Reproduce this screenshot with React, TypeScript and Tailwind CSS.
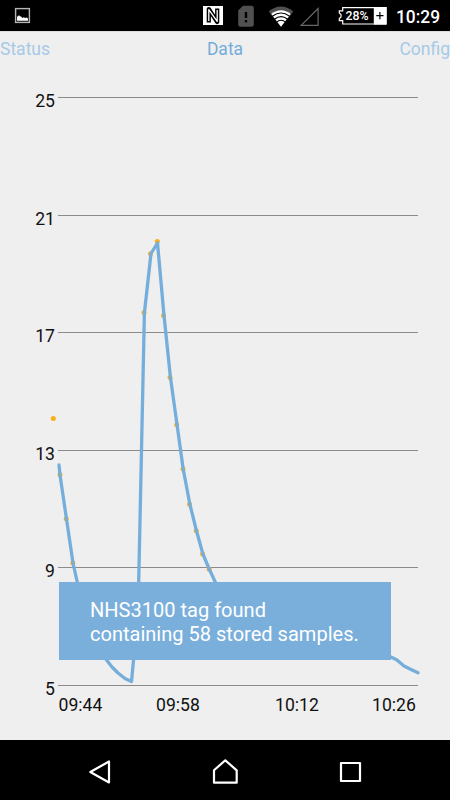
import React from 'react';

const gridLines = [
  { label: '25', y: 97.5 },
  { label: '21', y: 215.5 },
  { label: '17', y: 332.5 },
  { label: '13', y: 450.5 },
  { label: '9', y: 567.5 },
  { label: '5', y: 685.5 },
];

const times = [
  { label: '09:44', x: 58.5 },
  { label: '09:58', x: 156 },
  { label: '10:12', x: 275 },
  { label: '10:26', x: 372 },
];

const curve =
  '59,465 60,475 66.5,519 73,563 79,590 86,617 92,637 99,650 105,658 112,667 118,673 125,678.5 131.5,681.5 134,655 138.7,582 144.4,313 151,253.5 157.5,243 164,315.5 170.4,377 177,424.5 183.2,469 189.8,504 196.4,530.5 202.9,554 209.2,569 215.7,583 230,608 260,628 300,640 340,648 391,657 397,660 404,666 411,669.5 418,672.8';

const samples: [number, number][] = [
  [53.3, 418.5], [60, 474.7], [66.2, 518.8], [72.8, 563], [144, 312.5], [150.5, 253.7], [157.3, 241.5],
  [163.5, 315.5], [170, 377.5], [176.7, 424.7], [183, 469], [189.5, 504.3], [196.2, 530.8], [202.6, 554], [209.2, 569.3],
];

function StatusBar() {
  return (
    <header className="h-[31px] shrink-0 bg-black">
      <svg width="450" height="31" viewBox="0 0 450 31" className="block">
        <rect x="15.6" y="8.6" width="13.8" height="13.8" fill="none" stroke="#b5b5b5" strokeWidth="1.4" />
        <path d="M17 20.8V16.5l1.2-.2.8-1.3.8 1.2 1.3.2 1.2 1.6 1.5-.8 1.4.8 1.5-.4 1.3.8v2.4z" fill="#fff" />
        <rect x="203" y="6" width="20" height="19" fill="#fff" />
        <path d="M208.8 22.6V9L217.2 22V8.4" fill="none" stroke="#000" strokeWidth="4.2" strokeLinejoin="round" />
        <path d="M208.8 21V9.6L217.2 21.4V10" fill="none" stroke="#fff" strokeWidth="1.3" strokeLinejoin="round" />
        <path d="M243 5.7h8.5q2.3 0 2.3 2.3v16.5q0 2.3-2.3 2.3h-11q-2.3 0-2.3-2.3V10.5z" fill="#505050" />
        <path d="M246 12v6" stroke="#000" strokeWidth="2.4" />
        <path d="M246 20v2.4" stroke="#000" strokeWidth="2.4" />
        <path d="M268.7 11.4Q281 1.8 293.3 11.4L281 26.8z" fill="#505050" />
        <path d="M271.3 13.9Q281 6.4 290.7 13.9L281 26.8z" fill="#fff" />
        <g fill="none" stroke="#000" strokeWidth="1.1">
          <path d="M272.4 16.2Q281 9.8 289.6 16.2" />
          <path d="M274.4 19.2Q281 14 287.6 19.2" />
          <path d="M276.4 22.2Q281 18.3 285.6 22.2" />
        </g>
        <path d="M318.1 8.5v16.9h-16.9z" fill="none" stroke="#686868" strokeWidth="1.2" />
        <path d="M342.7 7.6H386V24H342.7V20.7H339.3V18.5L341 17V14.5L339.3 13V10.8H342.7z" fill="none" stroke="#fff" strokeWidth="1.2" />
        <path d="M373.8 7h12.8v17.6h-12.8z" fill="#fff" />
        <path d="M376.3 15.6h7.2M379.9 12v7.2" stroke="#000" strokeWidth="1.2" />
        <text x="357.1" y="20" fill="#fff" fontSize="12.8" fontWeight="500" textAnchor="middle" textLength="23" lengthAdjust="spacingAndGlyphs">28%</text>
        <text x="396" y="22.5" fill="#fff" fontSize="18" fontWeight="500" textLength="44" lengthAdjust="spacingAndGlyphs">10:29</text>
      </svg>
    </header>
  );
}

function Tabs() {
  return (
    <nav className="grid h-[37px] shrink-0 grid-cols-3 border-t border-[#dcdcdc] text-[17.5px] leading-[35px]">
      <span className="text-[#a6cae7]">Status</span>
      <span className="text-center text-[#74acda]">Data</span>
      <span className="text-right text-[#a6cae7]">Config</span>
    </nav>
  );
}

function TemperatureChart() {
  return (
    <svg width="450" height="672" viewBox="0 68 450 672" className="block">
      {gridLines.map((line) => (
        <g key={line.label}>
          <path d={`M58 ${line.y}H418`} stroke="#8b8b8b" strokeWidth="1" />
          <text x="55" y={line.y + 9} textAnchor="end" fontSize="17.6" fill="#111">{line.label}</text>
        </g>
      ))}
      {samples.map(([x, y]) => (
        <circle key={x} cx={x} cy={y} r="2.5" fill="#fbae17" />
      ))}
      <polyline points={curve} fill="none" stroke="#76aedb" strokeWidth="3.3" strokeLinejoin="round" strokeLinecap="round" />
      {times.map((time) => (
        <text key={time.label} x={time.x} y="710.5" fontSize="17.6" fill="#111">{time.label}</text>
      ))}
    </svg>
  );
}

function NavigationBar() {
  return (
    <footer className="h-[60px] shrink-0 bg-black">
      <svg width="450" height="60" viewBox="0 0 450 60" className="block" fill="none" stroke="#fff" strokeWidth="2.2" strokeLinejoin="round">
        <path d="M109 21.5v21L90.3 32z" />
        <path d="M225.3 20.3 236.7 30.3V42.7H214V30.3z" />
        <rect x="341" y="23" width="19" height="18" />
      </svg>
    </footer>
  );
}

export default function App() {
  return (
    <div className="flex h-[800px] w-[450px] flex-col overflow-hidden bg-[#efefef] font-[Roboto,sans-serif]">
      <StatusBar />
      <Tabs />
      <main className="relative flex-1">
        <TemperatureChart />
        <div className="absolute top-[514px] left-[59px] h-[78px] w-[332px] bg-[#7aafdb] pt-[16px] pl-[31px] text-[20.05px] leading-6 whitespace-nowrap text-white">
          <p>NHS3100 tag found</p>
          <p>containing 58 stored samples.</p>
        </div>
      </main>
      <NavigationBar />
    </div>
  );
}
